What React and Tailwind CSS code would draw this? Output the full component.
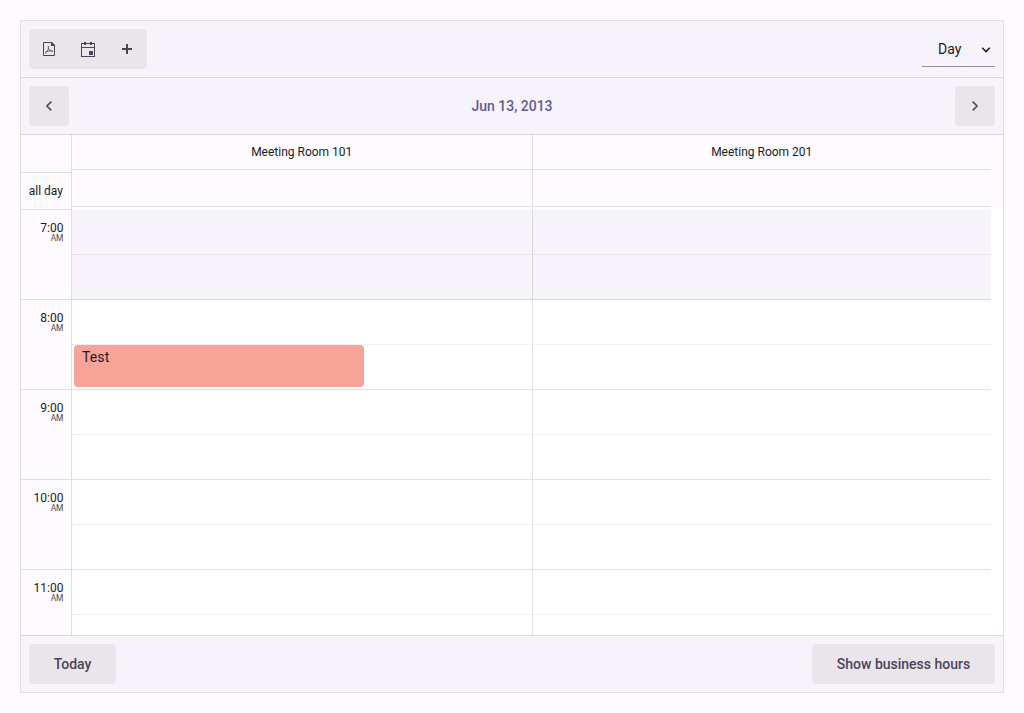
const hours = ['7:00', '8:00', '9:00', '10:00', '11:00'];
const rooms = ['Meeting Room 101', 'Meeting Room 201'];

function PdfIcon() {
  return (
    <svg width="16" height="16" viewBox="0 0 16 16" fill="none" stroke="currentColor">
      <path d="M10 1.5H2.5v13h11V5" />
      <path d="M10 1h1l3 3v1h-4z" fill="currentColor" stroke="none" />
      <path d="M7.4 5v2.2c0 1.8-1.4 3.8-3.2 5.2M7.4 7.2c.5 1.6 1.8 2.6 4.4 3M4.4 11c1.8-.9 4.6-1.3 7.4-.9" strokeWidth="0.8" />
    </svg>
  );
}

function CalendarIcon() {
  return (
    <svg width="16" height="16" viewBox="0 0 16 16" fill="currentColor" shapeRendering="crispEdges">
      <path d="M1 2h3V1h2v1h4V1h2v1h3v14H1zM2 3v3h12V3h-2v1h-2V3H6v1H4V3zM2 7v8h12V7z" fillRule="evenodd" />
      <path d="M9 10h4v4H9z" />
    </svg>
  );
}

function PlusIcon() {
  return (
    <svg width="16" height="16" viewBox="0 0 16 16" fill="currentColor">
      <path d="M7 3h2v4h4v2H9v4H7V9H3V7h4z" />
    </svg>
  );
}

function Chevron({ d }) {
  return (
    <svg width="16" height="16" viewBox="0 0 16 16" fill="none" stroke="currentColor" strokeWidth="1.5">
      <path d={d} />
    </svg>
  );
}

function Slot({ hour, half }) {
  const shade = hour === 0 ? 'bg-[#f6f3fa] border-[#dbd8df]' : 'bg-white border-[#e1e1e1]';
  const line = half ? 'border-solid' : '[border-bottom-style:dotted]';
  return (
    <div className="flex h-[45px]">
      <div className={`w-[460px] border-b ${shade} ${line}`} />
      <div className={`w-[459px] border-b border-l ${shade} ${line}`} />
    </div>
  );
}

export default function App() {
  return (
    <div className="h-[713px] bg-[#fdfbff] p-5 font-[Roboto,sans-serif] text-sm text-[#1c1b1e]">
      <div className="flex h-[673px] w-[984px] flex-col border border-[#e1dfe3]">
        <div className="flex h-[57px] shrink-0 items-center justify-between border-b border-[#dad7df] bg-[#f6f3fa] px-2">
          <div className="flex h-10 items-center gap-[23px] rounded bg-[#e9e5eb] px-3 text-[#494458]">
            <button><PdfIcon /></button>
            <button><CalendarIcon /></button>
            <button><PlusIcon /></button>
          </div>
          <button className="flex h-9 w-[73px] items-center justify-between border-b border-[#938f99] pr-px pl-4">
            <span className="pt-px">Day</span>
            <span className="pt-0.5"><Chevron d="M4.2 5.8 8 9.6l3.8-3.8" /></span>
          </button>
        </div>
        <div className="flex h-[57px] shrink-0 items-center justify-between border-b border-[#dad7df] bg-[#f6f3fa] px-2">
          <button className="flex size-10 items-center justify-center rounded bg-[#e9e5eb] text-[#494458]">
            <Chevron d="M10.3 3.6 5.9 8l4.4 4.4" />
          </button>
          <span className="font-medium text-[#655a92]">Jun 13, 2013</span>
          <button className="flex size-10 items-center justify-center rounded bg-[#e9e5eb] text-[#494458]">
            <Chevron d="M5.7 3.6 10.1 8l-4.4 4.4" />
          </button>
        </div>
        <div className="flex h-[500px] overflow-hidden bg-white text-xs">
          <div className="w-[51px] shrink-0 border-r border-[#e0dee2] bg-[#fdfbff] text-right">
            <div className="h-[38px] border-b border-[#e0dee2]" />
            <div className="h-[37px] border-b border-[#e0dee2] pr-2 leading-9">all day</div>
            {hours.map((hour) => (
              <div key={hour} className="h-[90px] border-b border-[#e0dee2] pt-3 pr-[7.6px]">
                <div className="leading-3">{hour}</div>
                <div className="text-[8.4px] leading-[9px] text-[#49454e]">AM</div>
              </div>
            ))}
          </div>
          <div className="flex-1">
            <div className="h-[72px] bg-[#fdfbff]">
              <div className="flex w-[919px]">
                {rooms.map((room, i) => (
                  <div key={room} className={i === 0 ? 'w-[460px]' : 'w-[459px] border-l border-[#e0dee2]'}>
                    <div className="h-[35px] border-b border-[#e0dee2] pr-[0.5px] text-center leading-[34px]">{room}</div>
                    <div className="h-[37px] border-b border-[#e0dee2]" />
                  </div>
                ))}
              </div>
            </div>
            <div className="relative mt-[3px]">
              {hours.map((hour, i) => (
                <div key={hour}>
                  <Slot hour={i} half={false} />
                  <Slot hour={i} half />
                </div>
              ))}
              <div className="absolute top-[135px] left-[2px] h-[42px] w-[290px] rounded bg-[#f7a398] px-2 py-0.5 text-sm tracking-[0.1px]">
                Test
              </div>
            </div>
          </div>
        </div>
        <div className="flex h-[57px] shrink-0 items-center justify-between border-t border-[#dad7df] bg-[#f6f3fa] px-2 font-medium text-[#494458]">
          <button className="h-10 w-[87px] rounded bg-[#e9e5eb]">Today</button>
          <button className="h-10 w-[183px] rounded bg-[#e9e5eb]">Show business hours</button>
        </div>
      </div>
    </div>
  );
}
